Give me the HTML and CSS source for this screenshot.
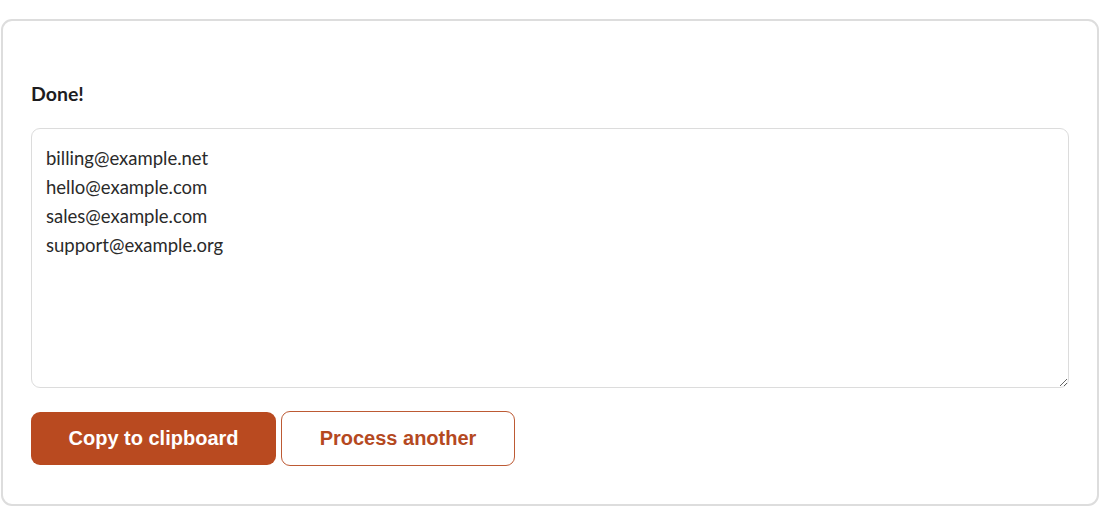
FILE: index.html
```
<!DOCTYPE html>
<html lang="en">
<head>
<meta charset="utf-8">
<title>Done</title>
<link rel="stylesheet" href="styles.css">
</head>
<body>
<div class="card">
  <h2 class="title">Done!</h2>
  <textarea class="output" spellcheck="false">billing@example.net
hello@example.com
sales@example.com
support@example.org</textarea>
  <div class="actions">
    <button class="btn btn-primary" type="button">Copy to clipboard</button>
    <button class="btn btn-outline" type="button">Process another</button>
  </div>
</div>
</body>
</html>
```
FILE: styles.css
```
html, body {
  margin: 0;
  padding: 0;
  background: #ffffff;
}
body {
  padding: 19px 1px 0 1px;
  font-family: Lato, "Open Sans", sans-serif;
}
.card {
  box-sizing: border-box;
  width: 1098px;
  height: 487px;
  border: 2px solid #dddddd;
  border-radius: 11px;
  padding: 61px 28px 0 28px;
  display: flex;
  flex-direction: column;
}
.title {
  margin: 0 0 22px 0;
  font-size: 19.5px;
  line-height: 24px;
  font-weight: 700;
  color: #1d1d1f;
}
.output {
  box-sizing: border-box;
  width: 100%;
  height: 260px;
  border: 1px solid #dcdcdc;
  border-radius: 9px;
  padding: 15px 14px 14px 14px;
  font-family: Lato, "Open Sans", sans-serif;
  font-size: 18.5px;
  line-height: 29px;
  color: #2a2a2a;
  resize: vertical;
  outline: none;
  margin: 0;
}
.actions {
  display: flex;
  gap: 5px;
  margin-top: 23px;
  align-items: center;
}
.btn {
  box-sizing: border-box;
  font-family: "Liberation Sans", Arial, sans-serif;
  font-weight: 700;
  font-size: 20px;
  border-radius: 9px;
  cursor: pointer;
  padding-bottom: 2px;
}
.btn-primary {
  width: 245px;
  height: 53px;
  background: #b94a20;
  color: #ffffff;
  border: none;
}
.btn-outline {
  width: 234px;
  height: 55px;
  background: #ffffff;
  color: #b5491f;
  border: 1px solid #bd5a34;
}
```
